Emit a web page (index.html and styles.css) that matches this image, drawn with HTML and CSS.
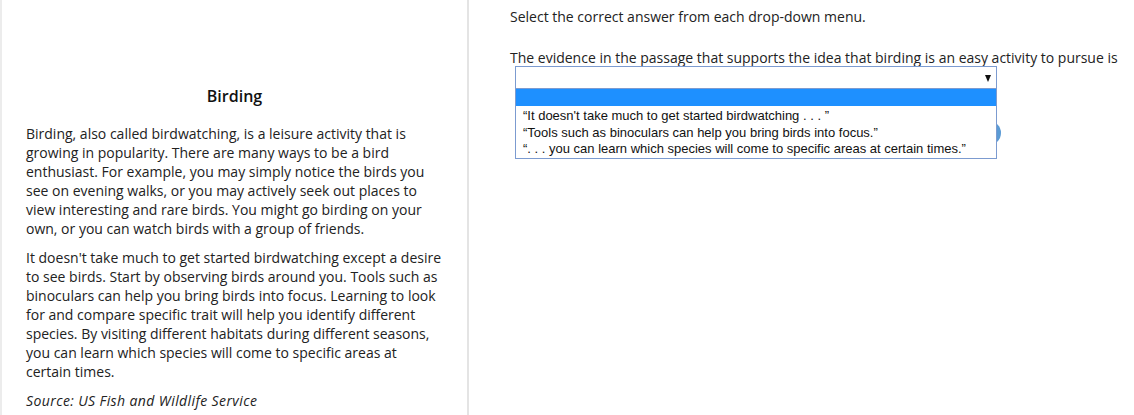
FILE: index.html
```html
<!DOCTYPE html>
<html>
<head>
<meta charset="utf-8">
<link rel="stylesheet" href="styles.css">
</head>
<body>
<div class="page">
  <div class="passage">
    <h2 class="title">Birding</h2>
    <p>Birding, also called birdwatching, is a leisure activity that is growing in popularity. There are many ways to be a bird enthusiast. For example, you may simply notice the birds you see on evening walks, or you may actively seek out places to view interesting and rare birds. You might go birding on your own, or you can watch birds with a group of friends.</p>
    <p>It doesn't take much to get started birdwatching except a desire to see birds. Start by observing birds around you. Tools such as binoculars can help you bring birds into focus. Learning to look for and compare specific trait will help you identify different species. By visiting different habitats during different seasons, you can learn which species will come to specific areas at certain times.</p>
    <p class="source">Source: US Fish and Wildlife Service</p>
  </div>
  <div class="question">
    <p class="instr">Select the correct answer from each drop-down menu.</p>
    <p class="stem">The evidence in the passage that supports the idea that birding is an easy activity to pursue is</p>
    <div class="dropdown">
      <div class="select"><span class="arrow"></span></div>
      <div class="circle"></div>
      <ul class="options">
        <li class="opt selected">&nbsp;</li>
        <li class="opt">“It doesn't take much to get started birdwatching . . . ”</li>
        <li class="opt">“Tools such as binoculars can help you bring birds into focus.”</li>
        <li class="opt">“. . . you can learn which species will come to specific areas at certain times.”</li>
      </ul>
    </div>
  </div>
</div>
</body>
</html>
```

FILE: styles.css
```css
* { box-sizing: border-box; }
html, body { margin: 0; padding: 0; background: #fff; }
body { font-family: "Open Sans", "DejaVu Sans", sans-serif; color: #222; width: 1134px; height: 415px; overflow: hidden; }
.page { display: flex; height: 415px; }
.passage {
  width: 469px;
  border-left: 2px solid #ececec;
  border-right: 2px solid #e4e4e4;
  padding: 85px 24px 0 24px;
  font-size: 14px;
  line-height: 19px;
  color: #222;
}
.title {
  margin: 0 0 17px 0;
  text-align: center;
  font-size: 16px;
  line-height: 22px;
  font-weight: 600;
  color: #111;
}
.passage p { margin: 0 0 10px 0; }
.passage .source { font-style: italic; letter-spacing: 0.4px; }
.question {
  flex: 1;
  padding: 7px 0 0 41px;
  font-size: 14px;
  line-height: 19px;
  color: #222;
}
.instr { margin: 0 0 22px 0; }
.stem { margin: 0 0 -1px 0; white-space: nowrap; }
.dropdown { position: relative; margin-left: 5px; width: 482px; }
.select {
  height: 23px;
  border: 1px solid #7c9bd0;
  background: #fff;
  position: relative;
}
.arrow {
  position: absolute;
  right: 5px;
  top: 8px;
  width: 0; height: 0;
  border-left: 3.5px solid transparent;
  border-right: 3.5px solid transparent;
  border-top: 7px solid #111;
}
.circle {
  position: absolute;
  left: 462px;
  top: 55px;
  width: 24px;
  height: 24px;
  border-radius: 50%;
  background: #5b9bd5;
}
.options {
  position: relative;
  list-style: none;
  margin: 0;
  padding: 0;
  border: 1px solid #7c9bd0;
  border-top: none;
  background: #fff;
  font-family: "Liberation Sans", Arial, sans-serif;
  font-size: 13px;
  color: #111;
}
.opt { height: 16.5px; line-height: 16px; padding-left: 7px; white-space: nowrap; }
.opt.selected { background: #1e90ff; height: 17px; margin-bottom: 2px; }
```
